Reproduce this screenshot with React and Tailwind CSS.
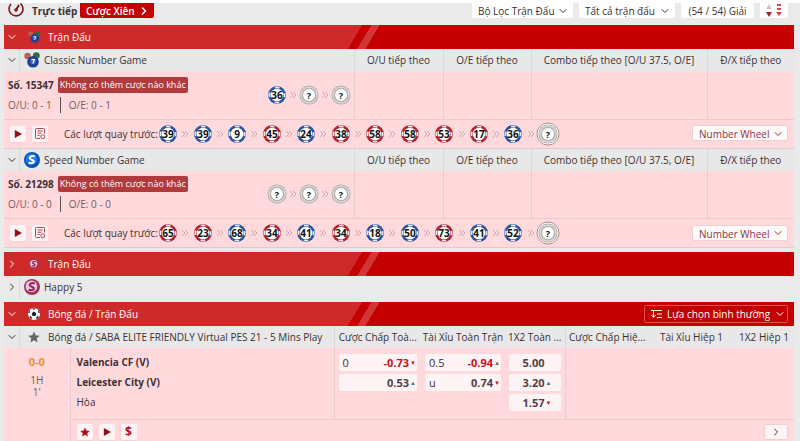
import React from "react";
import { ChevronDown, ChevronRight } from "lucide-react";

const numberGames = [
  {
    name: "Classic Number Game",
    icon: "classic",
    no: "15347",
    ou: "0 - 1",
    oe: "0 - 1",
    current: [36, "?", "?"],
    previous: [39, 39, 9, 45, 24, 38, 58, 58, 53, 17, 36, "?"],
    reds: [3, 5, 6, 7, 8, 9],
  },
  {
    name: "Speed Number Game",
    icon: "speed",
    no: "21298",
    ou: "0 - 0",
    oe: "0 - 0",
    current: ["?", "?", "?"],
    previous: [65, 23, 68, 34, 41, 34, 18, 50, 73, 41, 52, "?"],
    reds: [0, 1, 3, 5, 8],
  },
];

const Ball = ({ value, red, ring }) => {
  const unknown = value === "?";
  const color = red ? "#b3202c" : "#2a559c";
  return (
    <svg viewBox="0 0 24 24" className="size-6 shrink-0">
      {ring && <circle cx="12" cy="12" r="11" fill="#fff" stroke="#b08888" />}
      {unknown ? (
        <>
          <circle cx="12" cy="12" r="9.5" fill="#a9a7a4" />
          <circle cx="12" cy="12" r="8" fill="none" stroke="#dedbd8" strokeWidth="1.4" />
          <circle cx="12" cy="12" r="6.4" fill="#fff" stroke="#a5a3a0" strokeWidth="0.6" />
        </>
      ) : (
        <>
          <circle cx="12" cy="12" r="9" fill={color} />
          <circle
            cx="12"
            cy="12"
            r="7.6"
            fill="none"
            stroke="#e4e9f4"
            strokeWidth="1.8"
            strokeDasharray="4.5 7.438"
            strokeDashoffset="2.25"
          />
          <circle cx="12" cy="12" r="6.3" fill="#fff" />
        </>
      )}
      <text
        x="12"
        y="15.5"
        textAnchor="middle"
        fontSize={unknown ? 9 : 10}
        fontWeight="700"
        fill="#111">
        {value}
      </text>
    </svg>
  );
};

const Arrows = () => (
  <svg viewBox="0 0 8 8" className="size-2 shrink-0" fill="none" stroke="#c9abad">
    <path d="M1 1l3 3-3 3M4 1l3 3-3 3" />
  </svg>
);

const BallRow = ({ values, reds = [], ring, className }) => (
  <div className={`flex items-center justify-between ${className}`}>
    {values.map((value, i) => (
      <React.Fragment key={i}>
        {i > 0 && <Arrows />}
        <Ball
          value={value}
          red={reds.includes(i)}
          ring={ring && i === values.length - 1}
        />
      </React.Fragment>
    ))}
  </div>
);

const GameIcon = ({ type, className }) => {
  if (type === "classic") {
    return (
      <svg viewBox="0 0 16 16" className={className}>
        <circle cx="3.5" cy="4" r="3.2" fill="#b9604f" />
        <circle cx="12.3" cy="3.6" r="3.4" fill="#2f6b3d" />
        <circle cx="9" cy="9.8" r="5.8" fill="#1d3f94" />
        <circle cx="9" cy="9.2" r="3" fill="#3e63b8" />
        <path d="M7.6 7.6h2.8l-1.6 4" fill="none" stroke="#fff" strokeWidth="1.2" />
      </svg>
    );
  }
  return (
    <svg viewBox="0 0 16 16" className={className}>
      <circle cx="8" cy="8" r="8" fill={type === "speed" ? "#0f4fb0" : "#a3325f"} />
      <circle cx="7.4" cy="7.4" r="5.8" fill={type === "speed" ? "#1c7be0" : "#e9cbd8"} />
      <path
        d="M10.8 4.6C8.4 3.4 5.4 4.4 5.6 6.2c.2 1.7 4.4 1.3 4.3 3.2-.1 1.7-3 2.3-5.4 1.2"
        fill="none"
        stroke={type === "speed" ? "#fff" : "#96265a"}
        strokeWidth="2"
      />
    </svg>
  );
};

const SoccerIcon = () => (
  <svg viewBox="0 0 16 16" className="size-3">
    <circle cx="8" cy="8" r="8" fill="#fff" />
    <path
      fill="#222"
      d="M8 4.8l3.1 2.2-1.2 3.6H6.1L4.9 7zM5.5.6h5L8 2.6zM.2 6.5L1.8 2.9l1.3 3zM15.8 6.5l-1.6-3.6-1.3 3zM2 13l.6-3.1 2.5 2.6-.3 2.6zM14 13l-.6-3.1-2.5 2.6.3 2.6z"
    />
  </svg>
);

const Star = ({ className }) => (
  <svg viewBox="0 0 24 24" className={className} fill="currentColor">
    <path d="M12 1l3.3 7.6 8.2.8-6.2 5.4 1.9 8.1L12 18.6l-7.2 4.3 1.9-8.1L.5 9.4l8.2-.8z" />
  </svg>
);

const PlayIcon = () => (
  <svg viewBox="0 0 10 10" className="size-2" fill="#8f0f14">
    <path d="M1 0l9 5-9 5z" />
  </svg>
);

const ResultIcon = () => (
  <svg viewBox="0 0 12 12" className="size-3" fill="none" stroke="#b0444a">
    <path d="M10.5 5.5v-4a1 1 0 0 0-1-1h-7a1 1 0 0 0-1 1v8a1 1 0 0 0 1 1H6M3.5 3h5M3.5 5.2h4M3.5 7.5h2" />
    <circle cx="8.8" cy="8.8" r="2" />
  </svg>
);

const IconButton = ({ label, children }) => (
  <button
    aria-label={label}
    className="flex size-4 items-center justify-center rounded-xs bg-[#fff4f5] text-[#b01018] shadow-xs">
    {children}
  </button>
);

const SelectBox = ({ label, className, chevron, children }) => (
  <div className="relative">
    <select
      aria-label={label}
      className={`appearance-none pl-1.5 outline-none ${className}`}>
      <option>{children}</option>
    </select>
    <ChevronDown
      className={`pointer-events-none absolute top-1/2 right-1 size-3 -translate-y-1/2 ${chevron}`}
    />
  </div>
);

const SectionBar = ({ title, icon, open, children }) => (
  <div className="flex h-6 items-center bg-[linear-gradient(121deg,#cf2a2a_307px,#c40000_307px,#c40000_315px,#d23535_315px,#d23535_322px,#c40000_322px)] pr-1.5 text-white">
    <button
      aria-label={title}
      className="flex w-4 shrink-0 items-center justify-center">
      {open ? <ChevronDown className="size-3" /> : <ChevronRight className="size-3" />}
    </button>
    <span className="ml-1.5 flex w-4 justify-center">{icon}</span>
    <h2 className="ml-1.5 grow">{title}</h2>
    {children}
  </div>
);

const LeagueTitle = ({ title, icon, open = true }) => (
  <div className="flex h-full items-center">
    <button
      aria-label={title}
      className="flex h-full w-4 shrink-0 items-center justify-center border-r border-[#d9d9d9]">
      {open ? <ChevronDown className="size-3" /> : <ChevronRight className="size-3" />}
    </button>
    {icon}
    <span className="whitespace-nowrap">{title}</span>
  </div>
);

const NumberGame = ({ game }) => (
  <section className="border-b border-[#dccccd] bg-[#ffd9dc]">
    <table className="w-full table-fixed">
      <colgroup>
        <col />
        <col className="w-[89px]" />
        <col className="w-[88px]" />
        <col className="w-[176px]" />
        <col className="w-[87px]" />
      </colgroup>
      <thead className="bg-[#e8e8e8]">
        <tr className="h-[22px]">
          <th className="h-[22px] p-0 text-left font-normal">
            <LeagueTitle
              title={game.name}
              icon={<GameIcon type={game.icon} className="mx-1 size-4 shrink-0" />}
            />
          </th>
          {["O/U tiếp theo", "O/E tiếp theo", "Combo tiếp theo [O/U 37.5, O/E]", "Đ/X tiếp theo"].map(
            (head) => (
              <th
                key={head}
                className="border-l border-[#d9d9d9] p-0 font-normal whitespace-nowrap">
                {head}
              </th>
            )
          )}
        </tr>
      </thead>
      <tbody>
        <tr className="h-12 border-b border-[#edc9cc]">
          <td className="p-0">
            <div className="flex items-center justify-between pr-0.5 pl-1">
              <div>
                <div className="flex items-center gap-1">
                  <b>Số. {game.no}</b>
                  <span className="rounded-xs bg-[#b13a3c] px-0.5 text-[9px] text-white">
                    Không có thêm cược nào khác
                  </span>
                </div>
                <div className="mt-1 flex gap-2 text-[#75595b]">
                  <span className="border-r border-[#555] pr-2">O/U: {game.ou}</span>
                  <span>O/E: {game.oe}</span>
                </div>
              </div>
              <BallRow values={game.current} className="w-[87px]" />
            </div>
          </td>
          <td className="border-l border-[#edc9cc]" />
          <td className="border-l border-[#edc9cc]" />
          <td className="border-l border-[#edc9cc]" />
          <td className="border-l border-[#edc9cc]" />
        </tr>
      </tbody>
    </table>
    <div className="flex h-7 items-center px-1.5">
      <div className="flex gap-1.5">
        <IconButton label="Live">
          <PlayIcon />
        </IconButton>
        <IconButton label="Kết quả">
          <ResultIcon />
        </IconButton>
      </div>
      <div className="ml-4 flex grow items-center">
        <span className="w-23 shrink-0 whitespace-nowrap">Các lượt quay trước:</span>
        <BallRow
          values={game.previous}
          reds={game.reds}
          ring
          className="w-full max-w-[404px]"
        />
      </div>
      <SelectBox
        label="Number Wheel"
        className="h-4 w-24 rounded-xs border border-[#ecd0d2] bg-[#fffafa] text-[#8c2f3d]"
        chevron="text-[#8c2f3d]">
        Number Wheel
      </SelectBox>
    </div>
  </section>
);

const Trend = ({ dir }) => {
  if (dir === "up") return <span className="w-2 text-center text-[6px] text-[#55705f]">▲</span>;
  if (dir === "down") return <span className="w-2 text-center text-[6px] text-[#c8101a]">▼</span>;
  return <span className="w-2" />;
};

const Odds = ({ line, price, dir, className = "" }) => (
  <button
    className={`flex h-[17px] w-full items-center rounded-xs bg-[#fff4f5] pl-1 text-[11px] ${className}`}>
    <span>{line}</span>
    <b className={`ml-auto ${price.startsWith("-") ? "text-[#c8101a]" : "text-[#514044]"}`}>
      {price}
    </b>
    <Trend dir={dir} />
  </button>
);

const App = () => {
  return (
    <div className="min-h-screen overflow-hidden border-t-3 border-white bg-[#eaeaea] font-['Open_Sans',sans-serif] text-[10px] leading-4 text-[#3c3034]">
      {/* Toolbar */}
      <header className="flex h-[22px] items-start pr-3 pl-2">
        <svg viewBox="0 3 16 15" className="h-[15px] w-4 shrink-0" fill="none" stroke="#7c1820" strokeWidth="1.6">
          <path d="M12.5 3.5a7 7 0 1 1-9.5.5" />
          <path d="M8 10l3-5" strokeWidth="2" />
          <circle cx="8" cy="10" r="1" />
        </svg>
        <b className="ml-2 w-12 whitespace-nowrap">Trực tiếp</b>
        <button className="flex h-[15px] items-center justify-between rounded-b-xs bg-[#c40000] pr-1 pl-1.5 text-white">
          <span className="w-13 text-left font-semibold whitespace-nowrap">Cược Xiên</span>
          <ChevronRight className="size-3" strokeWidth={3} />
        </button>
        <div className="ml-auto flex gap-1.5">
          <SelectBox label="Bộ lọc" className="h-[15px] w-[101px] rounded-b-xs bg-white">
            Bộ Lọc Trận Đấu
          </SelectBox>
          <SelectBox label="Trận đấu" className="h-[15px] w-24 rounded-b-xs bg-white">
            Tất cả trận đấu
          </SelectBox>
          <button className="h-[15px] w-[73px] rounded-b-xs bg-white leading-3">
            (54 / 54) Giải
          </button>
          <button
            aria-label="Sắp xếp"
            className="flex h-[15px] w-7 justify-center rounded-b-xs bg-white">
            <svg viewBox="0 0 16 14" className="h-3.5 w-4">
              <path d="M0 6l3-5 3 5z" fill="#d5c5c5" />
              <path d="M0 9h6l-3 5z" fill="#a81f2b" />
              <path d="M11 1h4v2h-4zM11 5h4v2h-4zM10 9h6l-3 4z" fill="#d0484d" />
            </svg>
          </button>
        </div>
      </header>

      <main className="mr-1.5 ml-1">
        <SectionBar title="Trận Đấu" icon={<GameIcon type="classic" className="size-3" />} open />
        {numberGames.map((game) => (
          <NumberGame key={game.no} game={game} />
        ))}

        <div className="mt-1">
          <SectionBar title="Trận Đấu" icon={<GameIcon type="happy" className="size-2.5" />} />
          <div className="h-[22px]">
            <LeagueTitle
              title="Happy 5"
              icon={<GameIcon type="happy" className="mx-1 size-4 shrink-0" />}
              open={false}
            />
          </div>
        </div>

        {/* Football */}
        <div className="mt-1">
          <SectionBar title="Bóng đá / Trận Đấu" icon={<SoccerIcon />} open>
            <button className="flex h-[18px] w-36 items-center gap-1 rounded-xs border border-[#e05050] px-1.5">
              <svg viewBox="0 0 12 10" className="h-2.5 w-3 shrink-0" fill="none" stroke="#fff">
                <path d="M0 1.5h11M6 5h5M6 8.5h5M2.5 2v6M.5 6l2 2.5 2-2.5" />
              </svg>
              <span className="grow text-left whitespace-nowrap">Lựa chọn bình thường</span>
              <ChevronDown className="size-3 shrink-0" />
            </button>
          </SectionBar>
          <table className="w-full table-fixed bg-[#ffd9dc]">
            <colgroup>
              <col className="w-[66px]" />
              <col />
              <col className="w-[87px]" />
              <col className="w-[84px]" />
              <col className="w-[60px]" />
              <col className="w-[84px]" />
              <col className="w-[85px]" />
              <col className="w-[60px]" />
            </colgroup>
            <thead className="bg-[#e8e8e8]">
              <tr className="h-[22px]">
                <th colSpan={2} className="h-[22px] p-0 text-left font-normal">
                  <LeagueTitle
                    title="Bóng đá / SABA ELITE FRIENDLY Virtual PES 21 - 5 Mins Play"
                    icon={<Star className="mx-2 size-3 shrink-0 text-[#666]" />}
                  />
                </th>
                {[
                  "Cược Chấp Toà...",
                  "Tài Xỉu Toàn Trận",
                  "1X2 Toàn ...",
                  "Cược Chấp Hiệ...",
                  "Tài Xỉu Hiệp 1",
                  "1X2 Hiệp 1",
                ].map((head, i) => (
                  <th
                    key={head}
                    className={`p-0 font-normal whitespace-nowrap ${i === 0 || i === 3 ? "border-l border-[#d9d9d9]" : ""}`}>
                    {head}
                  </th>
                ))}
              </tr>
            </thead>
            <tbody>
              <tr className="h-[71px] align-top">
                <td rowSpan={2} className="border-r border-[#edc9cc] pt-1.5 text-center text-[#75595b]">
                  <b className="text-[11px] text-[#e8913a]">0-0</b>
                  <div className="mt-1 leading-3">
                    1H
                    <br />
                    1'
                  </div>
                </td>
                <td className="px-1.5 pt-1.5">
                  <div className="flex flex-col gap-1">
                    <b>Valencia CF (V)</b>
                    <b>Leicester City (V)</b>
                    <span>Hòa</span>
                  </div>
                </td>
                <td className="border-l border-[#edc9cc] px-1 pt-1.5">
                  <div className="flex flex-col gap-[3px]">
                    <Odds line="0" price="-0.73" dir="down" />
                    <Odds price="0.53" dir="up" />
                  </div>
                </td>
                <td className="px-1 pt-1.5">
                  <div className="flex flex-col gap-[3px]">
                    <Odds line="0.5" price="-0.94" dir="up" />
                    <Odds line="u" price="0.74" dir="down" />
                  </div>
                </td>
                <td className="px-1 pt-1.5">
                  <div className="flex flex-col gap-[3px]">
                    <Odds price="5.00" className="pr-2" />
                    <Odds price="3.20" dir="up" className="pr-2" />
                    <Odds price="1.57" dir="down" className="pr-2" />
                  </div>
                </td>
                <td className="border-l border-[#edc9cc]" />
                <td />
                <td />
              </tr>
              <tr>
                <td colSpan={7} className="border-t border-[#edc9cc] px-1.5 pt-1 pb-1">
                  <div className="flex items-center gap-1.5">
                    <IconButton label="Yêu thích">
                      <Star className="size-2.5" />
                    </IconButton>
                    <IconButton label="Live">
                      <PlayIcon />
                    </IconButton>
                    <IconButton label="Rút tiền">
                      <b className="text-xs">$</b>
                    </IconButton>
                    <button
                      aria-label="Thêm"
                      className="ml-auto flex h-4 w-6 items-center justify-center rounded-xs border border-[#ecd0d2] bg-[#fff4f5]">
                      <ChevronRight className="size-3" />
                    </button>
                  </div>
                </td>
              </tr>
            </tbody>
          </table>
        </div>
      </main>
    </div>
  );
};

export default App;
